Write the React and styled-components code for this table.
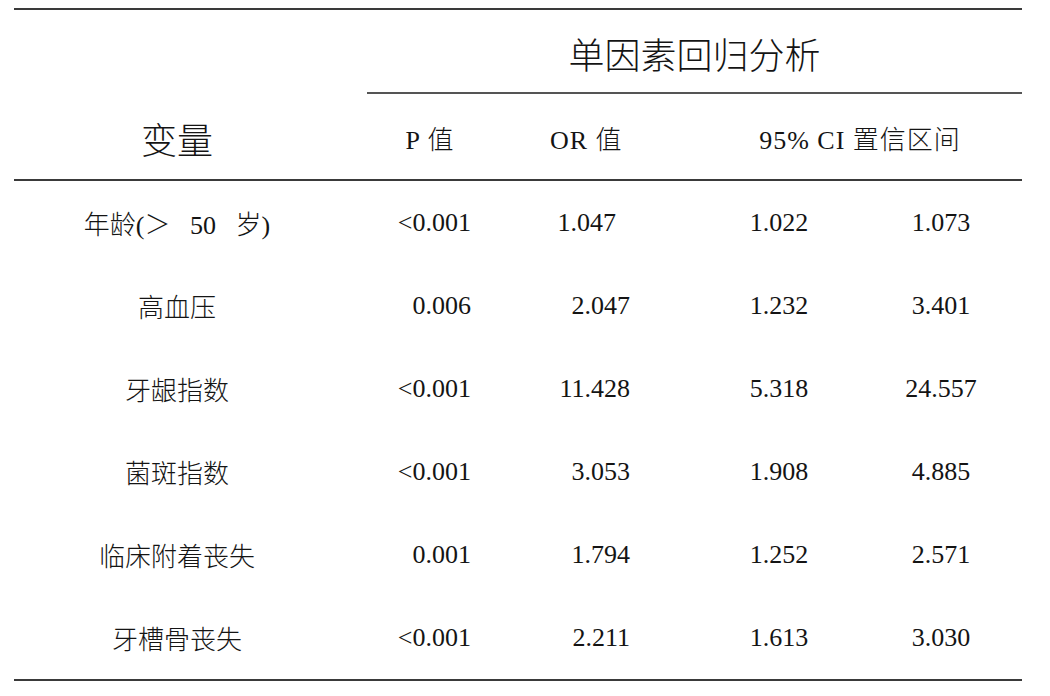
import React from "react";
import styled, { createGlobalStyle } from "styled-components";

const Global = createGlobalStyle`
  html, body { margin: 0; padding: 0; background: #ffffff; }
  body {
    font-family: "Liberation Serif", "Noto Sans CJK SC", serif;
    font-weight: 300;
    color: #141414;
  }
`;

const COLS = "326px 180px 170px 170px 162px";

const Page = styled.div`
  padding: 8px 0 0 14px;
`;

const Table = styled.div`
  width: 1008px;
  display: flex;
  flex-direction: column;
  border-top: 2px solid #3a3a3a;
  border-bottom: 2px solid #3a3a3a;
`;

const Header = styled.div`
  display: grid;
  grid-template-columns: ${COLS};
  grid-template-rows: 84px 85px;
  border-bottom: 2px solid #3a3a3a;
`;

const GroupTitle = styled.div`
  grid-column: 2 / 6;
  grid-row: 1;
  margin-left: 27px;
  box-sizing: border-box;
  border-bottom: 2px solid #555555;
  display: flex;
  align-items: center;
  justify-content: center;
  padding-top: 3px;
  font-family: "Noto Sans CJK SC", sans-serif;
  font-weight: 300;
  font-size: 36px;
`;

const VarHead = styled.div`
  grid-column: 1;
  grid-row: 2;
  display: flex;
  align-items: center;
  justify-content: center;
  padding-top: 2px;
  font-family: "Noto Sans CJK SC", sans-serif;
  font-weight: 300;
  font-size: 36px;
`;

const ColHead = styled.div`
  grid-row: 2;
  grid-column: ${(p) => p.$col};
  display: flex;
  align-items: center;
  justify-content: ${(p) => p.$justify || "center"};
  padding-left: ${(p) => p.$pl || 0}px;
  padding-top: 2px;
  font-size: 26px;
  letter-spacing: ${(p) => p.$ls || 0}px;
  white-space: pre;
`;

const Row = styled.div`
  display: grid;
  grid-template-columns: ${COLS};
  height: 83px;
`;

const Cell = styled.div`
  display: flex;
  align-items: center;
  justify-content: ${(p) => p.$justify || "center"};
  padding-left: ${(p) => p.$pl || 0}px;
  padding-right: ${(p) => p.$pr || 0}px;
  font-size: 26px;
  white-space: pre;
`;

const Label = styled(Cell)`
  font-weight: 300;
`;

const rows = [
  { name: "年龄(＞   50   岁)", p: "<0.001", or: "1.047", lo: "1.022", hi: "1.073", orPad: 74 },
  { name: "高血压", p: "0.006", or: "2.047", lo: "1.232", hi: "3.401" },
  { name: "牙龈指数", p: "<0.001", or: "11.428", lo: "5.318", hi: "24.557" },
  { name: "菌斑指数", p: "<0.001", or: "3.053", lo: "1.908", hi: "4.885" },
  { name: "临床附着丧失", p: "0.001", or: "1.794", lo: "1.252", hi: "2.571" },
  { name: "牙槽骨丧失", p: "<0.001", or: "2.211", lo: "1.613", hi: "3.030" },
];

export default function App() {
  return (
    <Page>
      <Global />
      <Table>
        <Header>
          <GroupTitle>单因素回归分析</GroupTitle>
          <VarHead>变量</VarHead>
          <ColHead $col="2" $ls={1}>P 值</ColHead>
          <ColHead $col="3" $justify="flex-start" $pl={30} $ls={1}>OR 值</ColHead>
          <ColHead $col="4 / 6" $pl={8} $ls={1}>95% CI 置信区间</ColHead>
        </Header>
        {rows.map((r) => (
          <Row key={r.name}>
            <Label>{r.name}</Label>
            <Cell $justify="flex-end" $pr={49}>{r.p}</Cell>
            <Cell $justify="flex-end" $pr={r.orPad || 60}>{r.or}</Cell>
            <Cell $pl={8}>{r.lo}</Cell>
            <Cell>{r.hi}</Cell>
          </Row>
        ))}
      </Table>
    </Page>
  );
}
